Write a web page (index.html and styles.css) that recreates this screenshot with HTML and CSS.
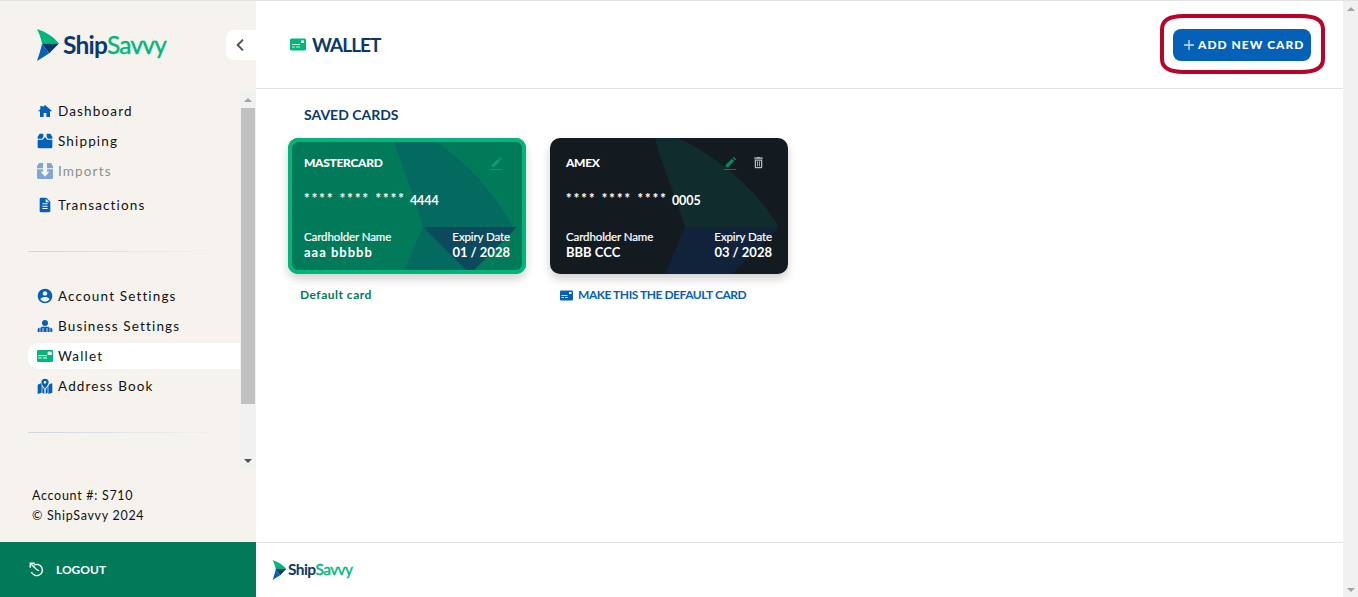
FILE: index.html
```html
<!DOCTYPE html>
<html lang="en">
<head>
    <meta charset="UTF-8">
    <meta name="viewport" content="width=device-width, initial-scale=1.0">
    <title>ShipSavvy - Wallet</title>
    <link rel="stylesheet" href="styles.css">
</head>
<body>
<div class="app">
  <aside class="sidebar">
    <div class="brand">
      <a class="logo" href="#">
        <svg class="logo-mark" viewBox="0 0 24 32"><path fill="#00b67a" d="M1 0C10 3 18 8 23 14.500H6C5 9 3 4 1 0z"/><path fill="#0a3a6b" d="M6 14.500H23L13 24.500C11 21 8 18 6 14.500z"/><path fill="#0560b8" d="M6 14.500C8 18 11 21 13 24.500L1 32C3 26 5 20 6 14.500z"/></svg>
        <span class="logo-text">Ship<em>Savvy</em></span>
      </a>
      <button type="button" class="collapse-btn"><svg viewBox="0 0 24 24"><path fill="none" stroke="#555" stroke-width="3" d="M15 4l-8 8 8 8"/></svg></button>
    </div>

    <div class="nav-wrap">
      <nav class="nav">
        <a class="nav-item" href="#"><svg class="nav-icon" viewBox="0 0 24 24"><path fill="#0560b8" d="M10 21v-6h4v6h5.500v-8.500H23L12 3 8.500 6.200V4.500H5v4.800L1 12.500h3.500V21z"/></svg>Dashboard</a>
        <a class="nav-item" href="#"><svg class="nav-icon" viewBox="0 0 24 24"><path fill="#0560b8" d="M1 8.500V5.500L4 1h5.500v5L7.500 8.500zM23 8.500V5.500L20 1h-5.500v5l2 2.500zM1 10h7.500L12 6l3.500 4H23v11a2 2 0 0 1-2 2H3a2 2 0 0 1-2-2z"/></svg>Shipping</a>
        <a class="nav-item is-disabled" href="#"><svg class="nav-icon" viewBox="0 0 24 24"><path fill="#0560b8" d="M0 8V5L3 0h6v8zM24 8V5l-3-5h-6v8zM0 9.500h9V13H5.500l6.500 7.500 6.500-7.500H15V9.500h9V22a2 2 0 0 1-2 2H2a2 2 0 0 1-2-2z"/></svg>Imports</a>
        <a class="nav-item nav-item-gap" href="#"><svg class="nav-icon" viewBox="0 0 24 24"><path fill="#0560b8" d="M14 1H6a2 2 0 0 0-2 2v18a2 2 0 0 0 2 2h12a2 2 0 0 0 2-2V7zm2 17H8v-1.500h8zm0-3.500H8V13h8zm0-3.500H8V9.500h8zM13 8V2.500L18.500 8z"/></svg>Transactions</a>
        <div class="nav-divider first"></div>
        <a class="nav-item" href="#"><svg class="nav-icon" viewBox="0 0 24 24"><path fill="#0560b8" d="M12 1a11 11 0 1 0 0 22 11 11 0 0 0 0-22zm0 4c1.900 0 3.400 1.500 3.400 3.400S13.900 11.800 12 11.800 8.600 10.300 8.600 8.400 10.100 5 12 5zm0 15.500c-2.800 0-5.300-1.400-6.800-3.600 0-2.300 4.500-3.500 6.800-3.500s6.800 1.200 6.800 3.500c-1.500 2.200-4 3.600-6.800 3.600z"/></svg>Account Settings</a>
        <a class="nav-item" href="#"><svg class="nav-icon" viewBox="0 0 24 24"><circle cx="12" cy="7.500" r="4.500" fill="#0560b8"/><path fill="#0560b8" d="M7 13h10l2 2v6H5v-6zM1 17c0-1.500 1.500-2.500 3-2.500V21H1zM23 17c0-1.500-1.500-2.500-3-2.500V21h3z"/><path stroke="#f6f3ef" stroke-width="1.300" d="M9 15v6M15 15v6"/></svg>Business Settings</a>
        <a class="nav-item is-active" href="#"><svg class="nav-icon" viewBox="0 0 24 24"><rect y="3" width="24" height="18" rx="1.500" fill="#00b67a"/><path stroke="#fff" stroke-width="1.500" d="M2 11.500h13M2 15h5M9 15h6"/><rect x="16" y="5.500" width="6" height="5" fill="#fff"/></svg>Wallet</a>
        <a class="nav-item" href="#"><svg class="nav-icon" viewBox="0 0 24 24"><path fill="#0560b8" d="M1 10l5-2 1 3v11l-6 2zM17 12l2-3 4-1v14l-6 2zM8 13l3 4v7l-3-2zM16 13l-3 4v7l3-2z"/><path fill="#0560b8" fill-rule="evenodd" d="M12 1a5.500 5.500 0 0 0-5.500 5.500C6.500 10 12 16 12 16s5.500-6 5.500-9.500A5.500 5.500 0 0 0 12 1zm0 3.500a2 2 0 1 1 0 4 2 2 0 0 1 0-4z"/></svg>Address Book</a>
        <div class="nav-divider second"></div>
      </nav>
      <div class="scrollbar side-scroll">
        <span class="arrow up"></span>
        <div class="track"><div class="thumb"></div></div>
        <span class="arrow down"></span>
      </div>
    </div>

    <div class="account-info">
      <p>Account #: S710</p>
      <p>© ShipSavvy 2024</p>
    </div>

    <a class="logout" href="#">
      <svg viewBox="0 0 24 24"><path fill="none" stroke="#fff" stroke-width="2.200" d="M8 5A9 9 0 1 1 4 16M2 9V2h7M2.500 2.500L12 12l4 2"/></svg>
      LOGOUT
    </a>
  </aside>

  <div class="main">
    <header class="topbar">
      <h1 class="page-title">
        <svg viewBox="0 0 16 13"><rect width="16" height="12" y=".5" rx="1.500" fill="#00b67a"/><path stroke="#fff" stroke-width=".8" d="M2 6.500h8M2 9h3M6 9h4"/><rect x="11" y="2.500" width="3" height="2.500" fill="#fff"/></svg>
        WALLET
      </h1>
      <div class="add-wrap">
        <button type="button" class="add-btn"><svg class="plus" viewBox="0 0 10 10"><path stroke="#cfe0f2" stroke-width="1.300" d="M5 0v10M0 5h10"/></svg>ADD NEW CARD</button>
        <svg class="annotation" viewBox="0 0 165 60"><path fill="none" stroke="#b5062a" stroke-width="4" d="M24 2H141C157 2 163 7 163 15V45C163 53 157 58 141 58H24C8 58 2 53 2 45V15C2 7 8 2 24 2z"/></svg>
      </div>
    </header>

    <section class="content">
      <h2 class="section-title">SAVED CARDS</h2>
      <div class="cards">
        <div class="card-col">
          <div class="card card-green">
            <svg class="card-bg" viewBox="0 0 238 136"><path fill="#04695f" d="M105 0H143Q195 35 225 89H135C125 55 115 30 105 0z"/><path fill="#04695f" d="M135 89L115 136H182z"/><path fill="#0a4a5c" d="M135 89H229L182 136z"/></svg>
            <div class="card-top"><span class="card-brand">MASTERCARD</span>
              <span class="card-actions"><svg class="edit dim" viewBox="0 0 16 16"><path fill="currentColor" d="M3 10.500V13h2.500L12 6.500 9.500 4zM13.500 5a.7.7 0 0 0 0-1L12 2.500a.7.7 0 0 0-1 0L10.300 3.200l2.500 2.500z"/><path stroke="currentColor" d="M1 15.500h13"/></svg></span>
            </div>
            <div class="card-number"><span class="dots">**** **** ****</span> 4444</div>
            <div class="card-bottom">
              <div><div class="card-label">Cardholder Name</div><div class="card-value lowercase">aaa bbbbb</div></div>
              <div class="align-right"><div class="card-label">Expiry Date</div><div class="card-value">01 / 2028</div></div>
            </div>
          </div>
          <div class="card-note default-note">Default card</div>
        </div>

        <div class="card-col">
          <div class="card card-dark">
            <svg class="card-bg" viewBox="0 0 238 136"><path fill="#102c2c" d="M105 0H128C170 20 205 50 229 89H135C125 55 112 30 105 0z"/><path fill="#10233a" d="M135 89H229L182 136H115z"/></svg>
            <div class="card-top"><span class="card-brand">AMEX</span>
              <span class="card-actions"><svg class="edit" viewBox="0 0 16 16"><path fill="currentColor" d="M3 10.500V13h2.500L12 6.500 9.500 4zM13.500 5a.7.7 0 0 0 0-1L12 2.500a.7.7 0 0 0-1 0L10.300 3.200l2.500 2.500z"/><path stroke="currentColor" d="M1 15.500h13"/></svg>
              <svg class="trash" viewBox="0 0 24 24"><path fill="#b9bcbf" d="M6 19c0 1.100.9 2 2 2h8c1.100 0 2-.9 2-2V7H6zM8 9h8v10H8zm7.500-5l-1-1h-5l-1 1H5v2h14V4z"/><path stroke="#b9bcbf" stroke-width="1.500" d="M10.500 10v8M13.500 10v8"/></svg></span>
            </div>
            <div class="card-number"><span class="dots">**** **** ****</span> 0005</div>
            <div class="card-bottom">
              <div><div class="card-label">Cardholder Name</div><div class="card-value">BBB CCC</div></div>
              <div class="align-right"><div class="card-label">Expiry Date</div><div class="card-value">03 / 2028</div></div>
            </div>
          </div>
          <a class="card-note make-default" href="#"><svg viewBox="0 0 13 11"><rect width="13" height="10" y=".5" rx="1" fill="#0560b8"/><path stroke="#fff" stroke-width=".8" d="M1.500 5.500h6M1.500 7.500h2.500M5 7.500h3"/><rect x="9" y="2" width="2.500" height="2" fill="#fff"/></svg>MAKE THIS THE DEFAULT CARD</a>
        </div>
      </div>
    </section>

    <footer class="footer">
      <a class="logo logo-small" href="#">
        <svg class="logo-mark" viewBox="0 0 24 32"><path fill="#00b67a" d="M1 0C10 3 18 8 23 14.500H6C5 9 3 4 1 0z"/><path fill="#0a3a6b" d="M6 14.500H23L13 24.500C11 21 8 18 6 14.500z"/><path fill="#0560b8" d="M6 14.500C8 18 11 21 13 24.500L1 32C3 26 5 20 6 14.500z"/></svg>
        <span class="logo-text">Ship<em>Savvy</em></span>
      </a>
    </footer>
  </div>

  <div class="scrollbar page-scroll">
    <span class="arrow up"></span>
    <div class="track"></div>
    <span class="arrow down"></span>
  </div>
</div>
</body>
</html>
```

FILE: styles.css
```css
:root {
    --sand: #f6f3ef;
    --navy: #0a3a6b;
    --blue: #0560b8;
    --green: #00b67a;
    --deep-green: #007a58;
    --line: #e2e2e2;
}

* {
    box-sizing: border-box;
}

body {
    margin: 0;
    height: 597px;
    overflow: hidden;
    font-family: "Lato", sans-serif;
    color: #111;
    background: #fff;
}

a {
    text-decoration: none;
    color: inherit;
}

.app {
    display: flex;
    height: 597px;
    border-top: 1px solid var(--line);
}

/* sidebar */
.sidebar {
    width: 256px;
    flex: none;
    display: flex;
    flex-direction: column;
    background: var(--sand);
}

.brand {
    height: 91px;
    flex: none;
    display: flex;
    align-items: flex-start;
    justify-content: space-between;
    padding: 28px 0 0 36px;
}

.logo {
    display: flex;
    align-items: center;
    gap: 3px;
}

.logo-mark {
    width: 24px;
    height: 32px;
}

.logo-text {
    margin-bottom: 2px;
    font-size: 24.500px;
    font-weight: 700;
    letter-spacing: -0.8px;
    color: var(--navy);
}

.logo-text em {
    font-style: normal;
    font-weight: 400;
    -webkit-text-stroke: 0.4px var(--green);
    color: var(--green);
}

.collapse-btn {
    width: 30px;
    height: 30px;
    margin-top: 1px;
    padding: 0 0 0 7px;
    border: none;
    border-radius: 8px 0 0 8px;
    background: #fff;
    display: flex;
    align-items: center;
}

.collapse-btn svg {
    width: 16px;
    height: 16px;
}

.nav-wrap {
    height: 376px;
    flex: none;
    display: flex;
}

.nav {
    flex: 1;
    padding: 6px 0 0 28px;
}

.nav-item {
    height: 26px;
    margin-bottom: 4px;
    padding-left: 9px;
    display: flex;
    align-items: center;
    gap: 5px;
    font-size: 13.500px;
    letter-spacing: 1.150px;
    border-radius: 10px 0 0 10px;
}

.nav-item-gap {
    margin-top: 8px;
}

.nav-item.is-disabled {
    color: #8d8d8d;
}

.nav-item.is-disabled .nav-icon {
    opacity: 0.5;
}

.nav-item.is-active {
    background: #fff;
}

.nav-icon {
    width: 16px;
    height: 16px;
    flex: none;
}

.nav-divider {
    height: 1px;
    margin-right: 10px;
    background: linear-gradient(90deg, #cfd6e0, #f6f3ef);
}

.nav-divider.first {
    margin-top: 33px;
    margin-bottom: 31px;
}

.nav-divider.second {
    margin-top: 33px;
}

.scrollbar {
    width: 16px;
    flex: none;
    display: flex;
    flex-direction: column;
    background: #f1f1f1;
}

.side-scroll {
    padding: 0 1px;
}

.side-scroll .arrow.up {
    height: 16px;
}

.page-scroll {
    width: 15px;
}

.arrow {
    height: 15px;
    flex: none;
    display: flex;
    align-items: center;
    justify-content: center;
}

.arrow::before {
    content: "";
    border-left: 4px solid transparent;
    border-right: 4px solid transparent;
}

.arrow.up::before {
    border-bottom: 4px solid #a3a3a3;
}

.arrow.down::before {
    border-top: 4px solid #505050;
}

.page-scroll .arrow.down::before {
    border-top-color: #a3a3a3;
}

.track {
    flex: 1;
}

.thumb {
    height: 296px;
    background: #c1c1c1;
}

.account-info {
    flex: 1;
    padding: 20px 0 0 32px;
    font-size: 12.500px;
    letter-spacing: 0.700px;
}

.account-info p {
    margin: 0 0 4px;
    line-height: 16px;
}

.logout {
    height: 55px;
    flex: none;
    padding-left: 29px;
    display: flex;
    align-items: center;
    gap: 12px;
    background: var(--deep-green);
    color: #fff;
    font-size: 12px;
    font-weight: 700;
}

.logout svg {
    width: 15px;
    height: 15px;
}

/* main column */
.main {
    flex: 1;
    min-width: 0;
    display: flex;
    flex-direction: column;
}

.topbar {
    height: 88px;
    flex: none;
    display: flex;
    align-items: center;
    justify-content: space-between;
    padding: 0 32px 0 34px;
    border-bottom: 1px solid var(--line);
}

.page-title {
    margin: 0 0 1px;
    display: flex;
    align-items: center;
    gap: 6px;
    font-size: 19px;
    font-weight: 700;
    letter-spacing: -1px;
    color: var(--navy);
}

.page-title svg {
    width: 16px;
    height: 13px;
}

.add-wrap {
    position: relative;
}

.add-btn {
    width: 138px;
    height: 32px;
    padding: 0 0 0 11px;
    display: flex;
    align-items: center;
    gap: 4px;
    border: none;
    border-radius: 8px;
    background: var(--blue);
    color: #fff;
    font-family: "Lato", sans-serif;
    font-size: 12px;
    font-weight: 900;
    letter-spacing: 1px;
}

.plus {
    width: 10px;
    height: 10px;
}

.annotation {
    position: absolute;
    left: -13px;
    top: -15px;
    width: 165px;
    height: 60px;
}

.content {
    flex: 1;
    padding: 17px 32px 0 32px;
}

.section-title {
    margin: 0 0 14px 16px;
    font-size: 14px;
    line-height: 18px;
    font-weight: 700;
    color: var(--navy);
}

.cards {
    display: flex;
    gap: 24px;
}

.card-col {
    width: 238px;
}

.card {
    position: relative;
    height: 136px;
    padding: 16px 16px 14px;
    border-radius: 10px;
    overflow: hidden;
    color: #fff;
    display: flex;
    flex-direction: column;
    box-shadow: 0 5px 10px rgba(0, 0, 0, 0.18);
}

.card-green {
    background: var(--deep-green);
    box-shadow: inset 0 0 0 4px var(--green), 0 5px 10px rgba(0, 0, 0, 0.18);
}

.card-dark {
    background: #131a20;
}

.card-bg {
    position: absolute;
    left: 0;
    top: 0;
    width: 238px;
    height: 136px;
}

.card-green .card-bg {
    clip-path: inset(4px round 7px);
}

.card-top, .card-number, .card-bottom {
    position: relative;
}

.card-top {
    height: 16px;
    display: flex;
    align-items: center;
    justify-content: space-between;
    font-size: 12px;
    font-weight: 900;
    letter-spacing: -0.3px;
}

.card-actions {
    display: flex;
    align-items: center;
    gap: 13px;
    padding-right: 6px;
}

.edit {
    width: 15px;
    height: 15px;
    color: var(--deep-green);
}

.card-dark .edit {
    color: #08875f;
}

.edit.dim {
    color: #129a6e;
}

.trash {
    width: 15px;
    height: 15px;
}

.card-number {
    margin-top: 22px;
    height: 16px;
    display: flex;
    align-items: center;
    gap: 4px;
    font-size: 12.500px;
    font-weight: 700;
}

.dots {
    font-size: 13px;
    font-weight: 900;
    letter-spacing: 2.100px;
    position: relative;
    top: -2px;
}

.card-bottom {
    margin-top: auto;
    display: flex;
    justify-content: space-between;
}

.align-right {
    text-align: right;
}

.card-label {
    margin-bottom: 2px;
    font-size: 11.500px;
    line-height: 13px;
    letter-spacing: -0.100px;
    -webkit-text-stroke: 0.2px #fff;
}

.card-value {
    font-size: 13px;
    line-height: 15px;
    font-weight: 700;
}

.card-value.lowercase {
    letter-spacing: 1px;
}

.card-note {
    margin-top: 14px;
    font-size: 12px;
    line-height: 14px;
    font-weight: 700;
}

.default-note {
    padding-left: 12px;
    color: var(--deep-green);
    letter-spacing: 0.5px;
}

.make-default {
    display: flex;
    align-items: center;
    gap: 5px;
    padding-left: 10px;
    color: var(--blue);
    letter-spacing: -0.45px;
}

.make-default svg {
    width: 13px;
    height: 11px;
}

.footer {
    height: 55px;
    flex: none;
    padding-left: 16px;
    display: flex;
    align-items: center;
    border-top: 1px solid var(--line);
}

.logo-small {
    gap: 1px;
}

.logo-small .logo-mark {
    width: 15px;
    height: 20px;
}

.logo-small .logo-text {
    margin-bottom: 3px;
    font-size: 15.500px;
    letter-spacing: -0.6px;
}
```
